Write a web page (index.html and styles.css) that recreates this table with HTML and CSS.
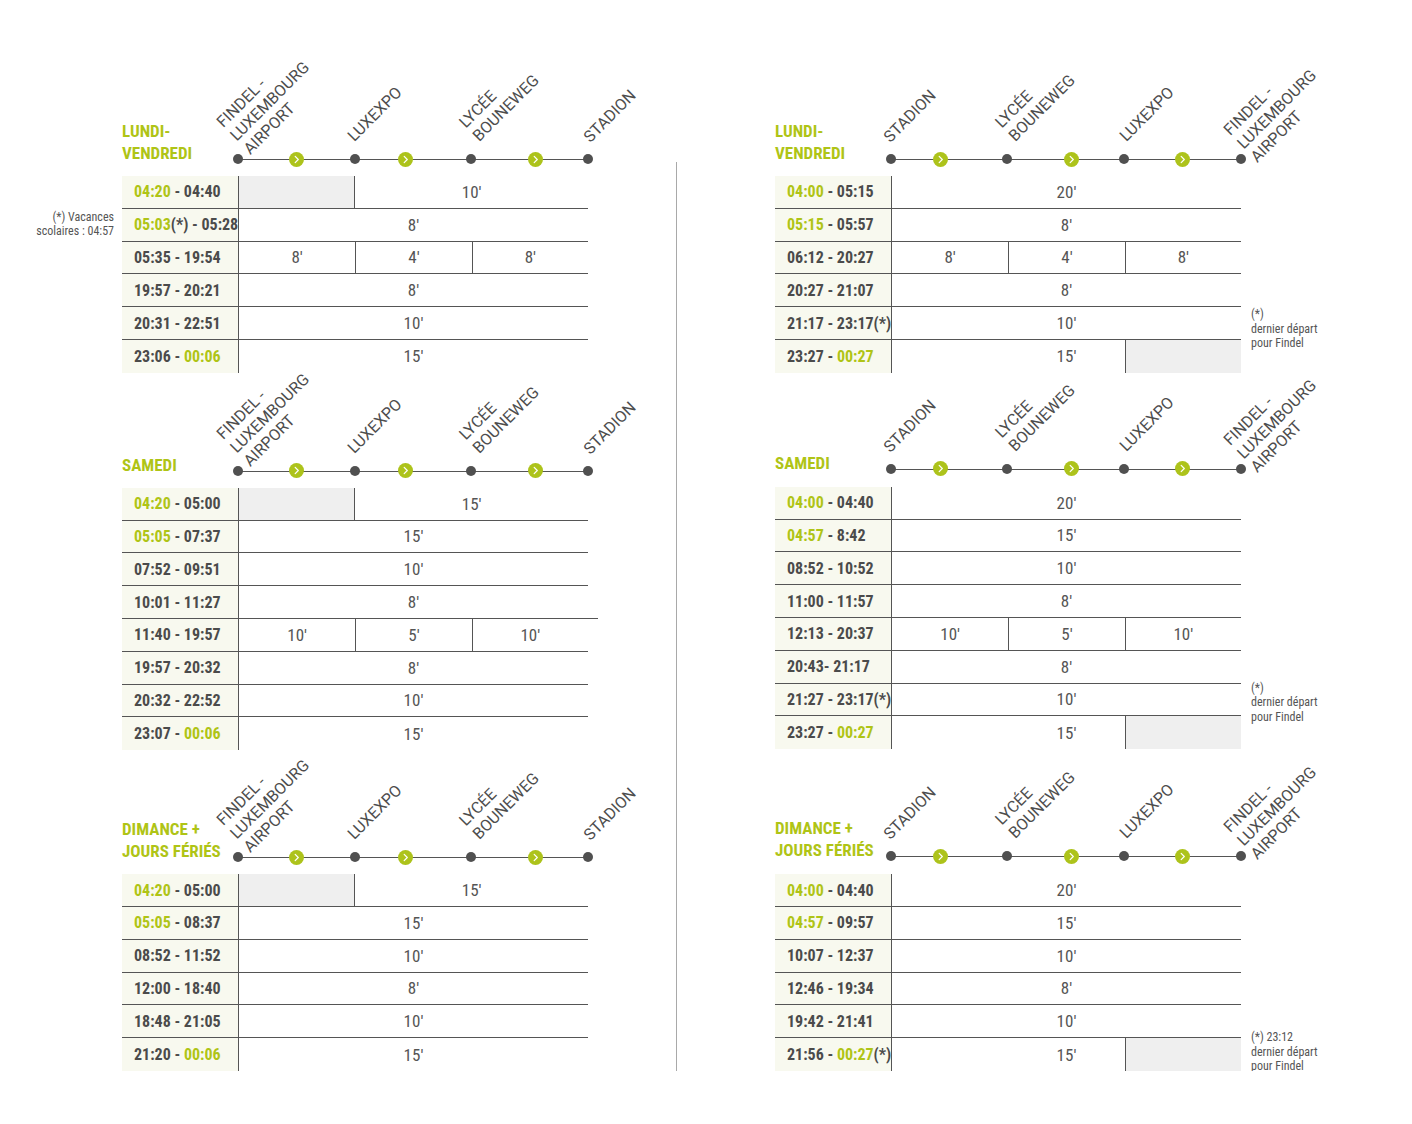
FILE: index.html
```html
<!DOCTYPE html>
<html lang="fr">
<head>
<meta charset="utf-8">
<title>Horaires</title>
<link rel="stylesheet" href="styles.css">
</head>
<body>
<div class="page">

  <div class="col col-l">

    <section class="block b1">
      <div class="head">
        <h2 class="title">LUNDI-<br>VENDREDI</h2>
        <div class="track o">
          <span class="lbl l-fin">FINDEL -<br>LUXEMBOURG<br>AIRPORT</span>
          <span class="lbl l-lux">LUXEXPO</span>
          <span class="lbl l-lyc">LYCÉE<br>BOUNEWEG</span>
          <span class="lbl l-sta">STADION</span>
          <span class="dot p1"></span>
          <svg class="arr g1" viewBox="0 0 16 16"><circle cx="8" cy="8" r="8"/><path d="M6.6 4.6 9.9 8 6.6 11.4"/></svg>
          <span class="dot p2"></span>
          <svg class="arr g2" viewBox="0 0 16 16"><circle cx="8" cy="8" r="8"/><path d="M6.6 4.6 9.9 8 6.6 11.4"/></svg>
          <span class="dot p3"></span>
          <svg class="arr g3" viewBox="0 0 16 16"><circle cx="8" cy="8" r="8"/><path d="M6.6 4.6 9.9 8 6.6 11.4"/></svg>
          <span class="dot p4"></span>
        </div>
      </div>
      <div class="table">
        <div class="row"><div class="time"><span class="hl">04:20</span>&nbsp;- 04:40</div><div class="gl"></div><div class="v s34">10′</div></div>
        <div class="row"><div class="note-l">(*) Vacances<br>scolaires : 04:57</div><div class="time"><span class="hl">05:03</span>(*) - 05:28</div><div class="v full">8′</div></div>
        <div class="row"><div class="time">05:35 - 19:54</div><div class="v c2">8′</div><div class="v c3 sep">4′</div><div class="v c4 sep">8′</div></div>
        <div class="row"><div class="time">19:57 - 20:21</div><div class="v full">8′</div></div>
        <div class="row"><div class="time">20:31 - 22:51</div><div class="v full">10′</div></div>
        <div class="row"><div class="time">23:06 - <span class="hl">&nbsp;00:06</span></div><div class="v full">15′</div></div>
      </div>
    </section>

    <section class="block b2">
      <div class="head">
        <h2 class="title">SAMEDI</h2>
        <div class="track o">
          <span class="lbl l-fin">FINDEL -<br>LUXEMBOURG<br>AIRPORT</span>
          <span class="lbl l-lux">LUXEXPO</span>
          <span class="lbl l-lyc">LYCÉE<br>BOUNEWEG</span>
          <span class="lbl l-sta">STADION</span>
          <span class="dot p1"></span>
          <svg class="arr g1" viewBox="0 0 16 16"><circle cx="8" cy="8" r="8"/><path d="M6.6 4.6 9.9 8 6.6 11.4"/></svg>
          <span class="dot p2"></span>
          <svg class="arr g2" viewBox="0 0 16 16"><circle cx="8" cy="8" r="8"/><path d="M6.6 4.6 9.9 8 6.6 11.4"/></svg>
          <span class="dot p3"></span>
          <svg class="arr g3" viewBox="0 0 16 16"><circle cx="8" cy="8" r="8"/><path d="M6.6 4.6 9.9 8 6.6 11.4"/></svg>
          <span class="dot p4"></span>
        </div>
      </div>
      <div class="table">
        <div class="row"><div class="time"><span class="hl">04:20</span>&nbsp;- 05:00</div><div class="gl"></div><div class="v s34">15′</div></div>
        <div class="row"><div class="time"><span class="hl">05:05</span>&nbsp;- 07:37</div><div class="v full">15′</div></div>
        <div class="row"><div class="time">07:52 - 09:51</div><div class="v full">10′</div></div>
        <div class="row"><div class="time">10:01 - 11:27</div><div class="v full">8′</div></div>
        <div class="row row-ext"><div class="time">11:40 - 19:57</div><div class="v c2">10′</div><div class="v c3 sep">5′</div><div class="v c4 sep">10′</div></div>
        <div class="row"><div class="time">19:57 - 20:32</div><div class="v full">8′</div></div>
        <div class="row"><div class="time">20:32 - 22:52</div><div class="v full">10′</div></div>
        <div class="row"><div class="time">23:07 - <span class="hl">&nbsp;00:06</span></div><div class="v full">15′</div></div>
      </div>
    </section>

    <section class="block b3">
      <div class="head">
        <h2 class="title">DIMANCE +<br>JOURS FÉRIÉS</h2>
        <div class="track o">
          <span class="lbl l-fin">FINDEL -<br>LUXEMBOURG<br>AIRPORT</span>
          <span class="lbl l-lux">LUXEXPO</span>
          <span class="lbl l-lyc">LYCÉE<br>BOUNEWEG</span>
          <span class="lbl l-sta">STADION</span>
          <span class="dot p1"></span>
          <svg class="arr g1" viewBox="0 0 16 16"><circle cx="8" cy="8" r="8"/><path d="M6.6 4.6 9.9 8 6.6 11.4"/></svg>
          <span class="dot p2"></span>
          <svg class="arr g2" viewBox="0 0 16 16"><circle cx="8" cy="8" r="8"/><path d="M6.6 4.6 9.9 8 6.6 11.4"/></svg>
          <span class="dot p3"></span>
          <svg class="arr g3" viewBox="0 0 16 16"><circle cx="8" cy="8" r="8"/><path d="M6.6 4.6 9.9 8 6.6 11.4"/></svg>
          <span class="dot p4"></span>
        </div>
      </div>
      <div class="table">
        <div class="row"><div class="time"><span class="hl">04:20</span>&nbsp;- 05:00</div><div class="gl"></div><div class="v s34">15′</div></div>
        <div class="row"><div class="time"><span class="hl">05:05</span>&nbsp;- 08:37</div><div class="v full">15′</div></div>
        <div class="row"><div class="time">08:52 - 11:52</div><div class="v full">10′</div></div>
        <div class="row"><div class="time">12:00 - 18:40</div><div class="v full">8′</div></div>
        <div class="row"><div class="time">18:48 - 21:05</div><div class="v full">10′</div></div>
        <div class="row"><div class="time">21:20 - <span class="hl">&nbsp;00:06</span></div><div class="v full">15′</div></div>
      </div>
    </section>

  </div>

  <div class="divider"></div>

  <div class="col col-r">

    <div class="blockrow r1">
      <section class="block">
        <div class="head">
          <h2 class="title">LUNDI-<br>VENDREDI</h2>
          <div class="track b">
            <span class="lbl l-sta">STADION</span>
            <span class="lbl l-lyc">LYCÉE<br>BOUNEWEG</span>
            <span class="lbl l-lux">LUXEXPO</span>
            <span class="lbl l-fin">FINDEL -<br>LUXEMBOURG<br>AIRPORT</span>
            <span class="dot p1"></span>
            <svg class="arr g1" viewBox="0 0 16 16"><circle cx="8" cy="8" r="8"/><path d="M6.6 4.6 9.9 8 6.6 11.4"/></svg>
            <span class="dot p2"></span>
            <svg class="arr g2" viewBox="0 0 16 16"><circle cx="8" cy="8" r="8"/><path d="M6.6 4.6 9.9 8 6.6 11.4"/></svg>
            <span class="dot p3"></span>
            <svg class="arr g3" viewBox="0 0 16 16"><circle cx="8" cy="8" r="8"/><path d="M6.6 4.6 9.9 8 6.6 11.4"/></svg>
            <span class="dot p4"></span>
          </div>
        </div>
        <div class="table">
          <div class="row"><div class="time"><span class="hl">04:00</span>&nbsp;- 05:15</div><div class="v full">20′</div></div>
          <div class="row"><div class="time"><span class="hl">05:15</span>&nbsp;- 05:57</div><div class="v full">8′</div></div>
          <div class="row"><div class="time">06:12 - 20:27</div><div class="v c2">8′</div><div class="v c3 sep">4′</div><div class="v c4 sep">8′</div></div>
          <div class="row"><div class="time">20:27 - 21:07</div><div class="v full">8′</div></div>
          <div class="row"><div class="time">21:17 - 23:17(*)</div><div class="v full">10′</div></div>
          <div class="row"><div class="time">23:27 - <span class="hl">&nbsp;00:27</span></div><div class="gr"></div><div class="v full">15′</div></div>
        </div>
      </section>
      <p class="note n1">(*)<br>dernier départ<br>pour Findel</p>
    </div>

    <div class="blockrow r2">
      <section class="block">
        <div class="head">
          <h2 class="title">SAMEDI</h2>
          <div class="track b">
            <span class="lbl l-sta">STADION</span>
            <span class="lbl l-lyc">LYCÉE<br>BOUNEWEG</span>
            <span class="lbl l-lux">LUXEXPO</span>
            <span class="lbl l-fin">FINDEL -<br>LUXEMBOURG<br>AIRPORT</span>
            <span class="dot p1"></span>
            <svg class="arr g1" viewBox="0 0 16 16"><circle cx="8" cy="8" r="8"/><path d="M6.6 4.6 9.9 8 6.6 11.4"/></svg>
            <span class="dot p2"></span>
            <svg class="arr g2" viewBox="0 0 16 16"><circle cx="8" cy="8" r="8"/><path d="M6.6 4.6 9.9 8 6.6 11.4"/></svg>
            <span class="dot p3"></span>
            <svg class="arr g3" viewBox="0 0 16 16"><circle cx="8" cy="8" r="8"/><path d="M6.6 4.6 9.9 8 6.6 11.4"/></svg>
            <span class="dot p4"></span>
          </div>
        </div>
        <div class="table">
          <div class="row"><div class="time"><span class="hl">04:00</span>&nbsp;- 04:40</div><div class="v full">20′</div></div>
          <div class="row"><div class="time"><span class="hl">04:57</span>&nbsp;- 8:42</div><div class="v full">15′</div></div>
          <div class="row"><div class="time">08:52 - 10:52</div><div class="v full">10′</div></div>
          <div class="row"><div class="time">11:00 - 11:57</div><div class="v full">8′</div></div>
          <div class="row"><div class="time">12:13 - 20:37</div><div class="v c2">10′</div><div class="v c3 sep">5′</div><div class="v c4 sep">10′</div></div>
          <div class="row"><div class="time">20:43- 21:17</div><div class="v full">8′</div></div>
          <div class="row"><div class="time">21:27 - 23:17(*)</div><div class="v full">10′</div></div>
          <div class="row"><div class="time">23:27 - <span class="hl">&nbsp;00:27</span></div><div class="gr"></div><div class="v full">15′</div></div>
        </div>
      </section>
      <p class="note n2">(*)<br>dernier départ<br>pour Findel</p>
    </div>

    <div class="blockrow r3">
      <section class="block">
        <div class="head">
          <h2 class="title">DIMANCE +<br>JOURS FÉRIÉS</h2>
          <div class="track b">
            <span class="lbl l-sta">STADION</span>
            <span class="lbl l-lyc">LYCÉE<br>BOUNEWEG</span>
            <span class="lbl l-lux">LUXEXPO</span>
            <span class="lbl l-fin">FINDEL -<br>LUXEMBOURG<br>AIRPORT</span>
            <span class="dot p1"></span>
            <svg class="arr g1" viewBox="0 0 16 16"><circle cx="8" cy="8" r="8"/><path d="M6.6 4.6 9.9 8 6.6 11.4"/></svg>
            <span class="dot p2"></span>
            <svg class="arr g2" viewBox="0 0 16 16"><circle cx="8" cy="8" r="8"/><path d="M6.6 4.6 9.9 8 6.6 11.4"/></svg>
            <span class="dot p3"></span>
            <svg class="arr g3" viewBox="0 0 16 16"><circle cx="8" cy="8" r="8"/><path d="M6.6 4.6 9.9 8 6.6 11.4"/></svg>
            <span class="dot p4"></span>
          </div>
        </div>
        <div class="table">
          <div class="row"><div class="time"><span class="hl">04:00</span>&nbsp;- 04:40</div><div class="v full">20′</div></div>
          <div class="row"><div class="time"><span class="hl">04:57</span>&nbsp;- 09:57</div><div class="v full">15′</div></div>
          <div class="row"><div class="time">10:07 - 12:37</div><div class="v full">10′</div></div>
          <div class="row"><div class="time">12:46 - 19:34</div><div class="v full">8′</div></div>
          <div class="row"><div class="time">19:42 - 21:41</div><div class="v full">10′</div></div>
          <div class="row"><div class="time">21:56 - <span class="hl">&nbsp;00:27</span>(*)</div><div class="gr"></div><div class="v full">15′</div></div>
        </div>
      </section>
      <p class="note n3">(*) 23:12<br>dernier départ<br>pour Findel</p>
    </div>

  </div>
</div>
</body>
</html>
```
FILE: styles.css
```css
* { box-sizing: border-box; }

body {
  margin: 0;
  background: #fff;
  font-family: "Roboto Condensed", "Roboto", "Liberation Sans", sans-serif;
  font-stretch: condensed;
  color: #4b4b4b;
}

.page {
  display: flex;
  align-items: stretch;
  padding-left: 122px;
}

.col {
  flex: none;
  padding-top: 120px;
}
.col-l { width: 466px; }
.col-r { margin-left: 98px; }

.divider {
  flex: none;
  width: 1px;
  margin: 162px 0 0 88px;
  background: #a9a9a9;
}

.blockrow {
  display: flex;
  align-items: flex-end;
}

.block { width: 466px; flex: none; }

.col-l .b2 { margin-top: 81px; }
.col-l .b3 { margin-top: 68px; }
.col-r .r2 { margin-top: 79px; }
.col-r .r3 { margin-top: 68px; }

/* header */
.head {
  display: flex;
  align-items: flex-end;
}

.title {
  flex: none;
  width: 116px;
  margin: 0 0 2px;
  font-size: 17px;
  line-height: 22px;
  font-weight: 700;
  color: #afc416;
  white-space: nowrap;
}

.track {
  position: relative;
  flex: none;
  width: 350px;
  height: 14px;
}
.track::before {
  content: "";
  position: absolute;
  left: 0;
  right: 0;
  top: 7px;
  height: 1px;
  background: #555;
}

.dot {
  position: absolute;
  top: 2px;
  width: 10px;
  height: 10px;
  margin-left: -5px;
  border-radius: 50%;
  background: #505050;
}

.arr {
  position: absolute;
  top: -0.5px;
  width: 15px;
  height: 15px;
  margin-left: -7.5px;
}
.arr circle { fill: #adc31b; }
.arr path {
  fill: none;
  stroke: #fff;
  stroke-width: 1.3;
  stroke-linecap: round;
  stroke-linejoin: round;
}

.lbl {
  position: absolute;
  transform-origin: 0 100%;
  transform: rotate(-45deg);
  font-family: "Roboto", "Liberation Sans", sans-serif;
  font-stretch: normal;
  font-size: 16px;
  line-height: 19px;
  color: #4d4d4d;
  white-space: nowrap;
}

/* outbound (Findel -> Stadion) */
.o .p1 { left: 0; }
.o .p2 { left: 117px; }
.o .p3 { left: 233px; }
.o .p4 { left: 350px; }
.o .g1 { left: 58px; }
.o .g2 { left: 167px; }
.o .g3 { left: 297px; }
.o .l-fin { left: 15px; bottom: 8px; }
.o .l-lux { left: 119px; bottom: 21px; }
.o .l-lyc { left: 244px; bottom: 21px; }
.o .l-sta { left: 355px; bottom: 20px; }

/* return (Stadion -> Findel) */
.b .p1 { left: 0; }
.b .p2 { left: 116px; }
.b .p3 { left: 233px; }
.b .p4 { left: 350px; }
.b .g1 { left: 49px; }
.b .g2 { left: 180px; }
.b .g3 { left: 291px; }
.b .l-sta { left: 2px; bottom: 20px; }
.b .l-lyc { left: 127px; bottom: 21px; }
.b .l-lux { left: 238px; bottom: 21px; }
.b .l-fin { left: 369px; bottom: 0; }

/* table */
.table { margin-top: 10px; }
.col-r .r2 .table,
.col-r .r3 .table { margin-top: 11px; }

.row {
  position: relative;
  display: grid;
  grid-template-columns: 117px 1fr 1fr 1fr;
  height: 32.8px;
  border-bottom: 1px solid #555;
}
.row:last-child { border-bottom: 0; }

.row-ext::after {
  content: "";
  position: absolute;
  left: 100%;
  top: -1px;
  width: 10px;
  height: 1px;
  background: #555;
}

.time {
  grid-column: 1;
  grid-row: 1;
  display: flex;
  align-items: center;
  padding-left: 12px;
  background: #f8f9ef;
  border-right: 1px solid #555;
  font-size: 16px;
  font-weight: 700;
  color: #4b4b4b;
  white-space: nowrap;
}

.hl { color: #afc416; }

.v {
  grid-row: 1;
  display: flex;
  align-items: center;
  justify-content: center;
  font-size: 17px;
  color: #555;
}
.full { grid-column: 2 / 5; }
.s34 { grid-column: 3 / 5; }
.c2 { grid-column: 2; }
.c3 { grid-column: 3; }
.c4 { grid-column: 4; }
.sep { border-left: 1px solid #555; }

.gl {
  grid-column: 2;
  grid-row: 1;
  background: #efefef;
  border-right: 1px solid #555;
}
.gr {
  grid-column: 4;
  grid-row: 1;
  background: #efefef;
  border-left: 1px solid #555;
}

/* notes */
.note {
  margin: 0 0 0 10px;
  font-size: 12px;
  line-height: 14.5px;
  color: #555;
  white-space: nowrap;
}
.n1 { margin-bottom: 22px; }
.n2 { margin-bottom: 25px; }
.n3 { margin-bottom: -3px; }

.note-l {
  position: absolute;
  right: 100%;
  top: 1px;
  margin-right: 8px;
  font-size: 12px;
  line-height: 14px;
  color: #555;
  text-align: right;
  white-space: nowrap;
}
```
